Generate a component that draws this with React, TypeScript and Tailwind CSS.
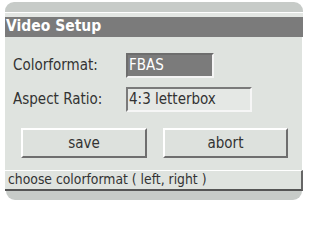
export default function App() {
  return (
    <div className="w-[313px] h-[213px] bg-white pt-[2px] pl-[5px] font-['DejaVu_Sans',sans-serif] font-stretch-condensed text-[15px] text-[#333]">
      <div className="w-[298px] flex flex-col">
        <div className="h-[10px] rounded-t-[9px] bg-[#c7cbc8]" />
        <div className="h-[1px] bg-white" />
        <div className="h-[4px] bg-[#e3e6e3]" />
        <div className="h-[20px] bg-[#7b7b7b] flex items-center pl-[1px] text-white font-bold text-[15.5px] leading-none">
          Video Setup
        </div>
        <div className="h-[133px] bg-[#dfe3df] border-r border-white flex flex-col pt-[16px]">
          <div className="grid grid-cols-[113px_auto] gap-y-[9px] pl-[8px] items-center">
            <span>Colorformat:</span>
            <div className="w-[88px] h-[25px] bg-[#7b7b7b] border-t-2 border-l-2 border-[#6d6d6d] border-r-2 border-b-2 border-r-[#f4f4f4] border-b-[#f4f4f4] text-white flex items-center pl-[1px]">
              FBAS
            </div>
            <span>Aspect Ratio:</span>
            <div className="w-[126px] h-[25px] bg-[#e5e8e5] border-2 border-t-[#7a7a7a] border-l-[#7a7a7a] border-r-[#f6f6f6] border-b-[#f6f6f6] flex items-center pl-[1px]">
              4:3 letterbox
            </div>
          </div>
          <div className="flex gap-[16px] pl-[16px] mt-[16px]">
            <button className="w-[126px] h-[30px] bg-[#dde1dd] border-2 border-t-white border-l-white border-r-[#6e6e6e] border-b-[#6e6e6e] text-[#333] text-[15px]">
              save
            </button>
            <button className="w-[125px] h-[30px] bg-[#dde1dd] border-2 border-t-white border-l-white border-r-[#6e6e6e] border-b-[#6e6e6e] text-[#333] text-[15px]">
              abort
            </button>
          </div>
        </div>
        <div className="h-[21px] bg-[#dfe3df] border-t border-t-white border-b-2 border-r-2 border-b-[#555] border-r-[#666] flex items-center pl-[3px] text-[13.8px] leading-none">
          choose colorformat ( left, right )
        </div>
        <div className="h-[9px] rounded-b-[9px] bg-[#c7cbc8] mx-[1px]" />
      </div>
    </div>
  );
}
